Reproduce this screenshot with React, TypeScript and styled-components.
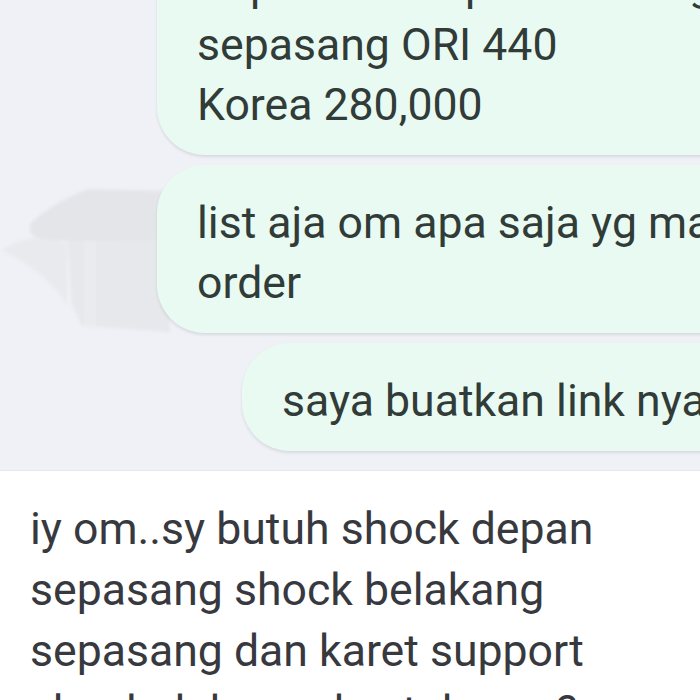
import React from 'react';
import styled, { createGlobalStyle } from 'styled-components';

const GlobalStyle = createGlobalStyle`
    html, body {
        margin: 0;
        padding: 0;
        background: #ffffff;
    }
    body {
        font-family: Roboto, "Noto Sans", "Liberation Sans", sans-serif;
        -webkit-font-smoothing: antialiased;
    }
`;

const Screen = styled.div`
    width: 700px;
    height: 700px;
    overflow: hidden;
    display: flex;
    flex-direction: column;
    background: #ffffff;
`;

const ChatArea = styled.section`
    position: relative;
    flex: 0 0 470px;
    overflow: hidden;
    background: #eff1f6;
    border-bottom: 1px solid #e6e8ec;
`;

const Watermark = styled.svg`
    position: absolute;
    left: 0;
    top: 0;
    z-index: 0;
    filter: blur(1.5px);
`;

const MessageList = styled.div`
    position: relative;
    z-index: 1;
    display: flex;
    flex-direction: column;
    align-items: flex-start;
    gap: 10px;
    margin-top: -73px;
    padding-left: 157px;
`;

const Bubble = styled.div<{ $indent?: number }>`
    margin-left: ${(p) => p.$indent ?? 0}px;
    padding: 28px 60px 20px 40px;
    min-width: 700px;
    border-radius: 48px 0 0 48px;
    background: #e8faf1;
    box-shadow: 0 2px 3px rgba(60, 70, 80, 0.13);
    color: #313b38;
    font-size: 44.6px;
    line-height: 60px;
    white-space: nowrap;
`;

const Line = styled.div``;

const Composer = styled.div`
    flex: 1;
    padding: 28px 30px 0;
    background: #ffffff;
    color: #37393e;
    font-size: 44.6px;
    line-height: 61px;
    white-space: nowrap;
`;

const messages: { lines: string[]; indent?: number }[] = [
    { lines: ['Depan shock per unit harga', 'sepasang ORI 440', 'Korea 280,000'] },
    { lines: ['list aja om apa saja yg mau di', 'order'] },
    { lines: ['saya buatkan link nya'], indent: 85 }
];

const draft = [
    'iy om..sy butuh shock depan',
    'sepasang shock belakang',
    'sepasang dan karet support',
    'shock dalam ada stok nya ?'
];

const GhostMark = () => (
    <Watermark width="180" height="340" viewBox="0 0 180 340">
        <path d="M2 250 Q 20 238 45 237 L 67 244 L 67 304 Q 45 272 2 250 Z" fill="#e9eaed" />
        <polygon points="67,238 170,238 170,332 82,326 72,305" fill="#e7e8eb" />
        <rect x="84" y="240" width="12" height="86" fill="#eaebee" />
        <path
            d="M30 224 Q 50 204 88 189 L 170 191 L 170 240 L 62 241 Q 34 240 30 232 Z"
            fill="#e4e5e8"
        />
    </Watermark>
);

export default function App() {
    return (
        <>
            <GlobalStyle />
            <Screen>
                <ChatArea>
                    <GhostMark />
                    <MessageList>
                        {messages.map((m, i) => (
                            <Bubble key={i} $indent={m.indent}>
                                {m.lines.map((l) => (
                                    <Line key={l}>{l}</Line>
                                ))}
                            </Bubble>
                        ))}
                    </MessageList>
                </ChatArea>
                <Composer>
                    {draft.map((l) => (
                        <Line key={l}>{l}</Line>
                    ))}
                </Composer>
            </Screen>
        </>
    );
}
